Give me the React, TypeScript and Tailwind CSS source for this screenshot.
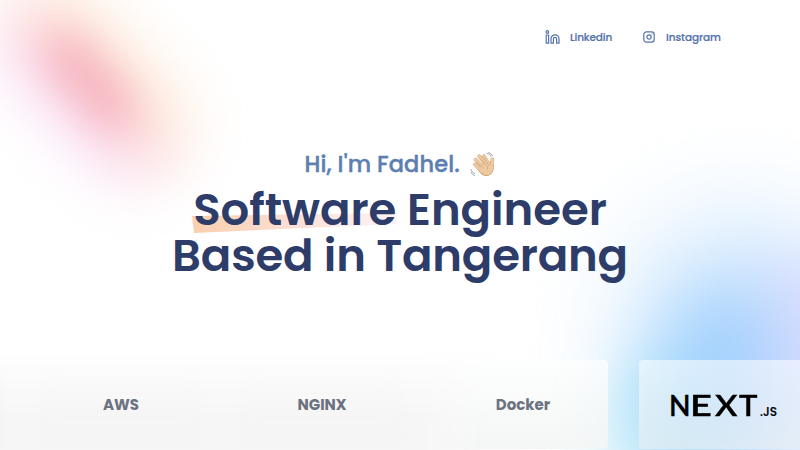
import React from "react";

const cards = ["AWS", "NGINX", "Docker"];

function Backdrop() {
  return (
    <div className="pointer-events-none absolute inset-0 overflow-hidden">
      <div className="absolute -left-[22px] top-[24px] h-[116px] w-[232px] rotate-[47deg] rounded-full bg-gradient-to-b from-[#fdd6b4] from-25% via-[#f7a8a2] via-55% to-[#f3b4ee] to-85% opacity-45 blur-[28px]" />
      <div className="absolute left-[32px] top-[59px] h-[44px] w-[116px] rotate-[49deg] rounded-full bg-[#ee7a96] opacity-45 blur-[20px]" />
      <div className="absolute left-[620px] top-[210px] h-[300px] w-[240px] rounded-full bg-[#c4e2fd] opacity-70 blur-[48px]" />
      <div className="absolute left-[610px] top-[355px] h-[140px] w-[110px] rounded-full bg-[#9fe0f4] opacity-60 blur-[28px]" />
      <div className="absolute left-[665px] top-[285px] h-[160px] w-[130px] rounded-full bg-[#85c2fc] opacity-60 blur-[34px]" />
      <div className="absolute left-[765px] top-[250px] h-[180px] w-[90px] rounded-full bg-[#d5ceff] opacity-50 blur-[30px]" />
    </div>
  );
}

function LinkedinIcon() {
  return (
    <svg className="h-[14px] w-[15px]" viewBox="0 0 15 14" fill="none" stroke="currentColor" strokeWidth="1.2" strokeLinejoin="round">
      <circle cx="2.4" cy="2" r="1.3" />
      <path d="M1.2 5h2.400v8.200H1.200zM6 13.200V8.800a4 4 0 0 1 8 0v4.400h-2.400V9a1.600 1.600 0 0 0-3.200 0v4.200z" />
    </svg>
  );
}

function InstagramIcon() {
  return (
    <svg className="h-[12px] w-[12px]" viewBox="0 0 12 12" fill="none" stroke="currentColor" strokeWidth="1.2">
      <rect x="0.8" y="0.8" width="10.4" height="10.4" rx="2.6" />
      <circle cx="6" cy="6" r="2.1" />
      <path d="M8.600 3.100h.8" />
    </svg>
  );
}

function WavingHand() {
  return (
    <svg className="h-[26px] w-[26px]" viewBox="0 0 26 26" fill="none" strokeLinecap="round">
      <g stroke="#cfa57a" strokeWidth="3.7">
        <path d="M5 12.500l7 7M5.600 7.600l9 9M9.200 4.200l8 9M14 4.200l4.500 8M22.300 7.400l-.5 8" />
      </g>
      <path d="M8 15l8-6 5 1 2.500 4c1 4-1 8-4.500 9.500-4 1.500-7 0-11-5z" fill="#cfa57a" />
      <g stroke="#edc8a0" strokeWidth="2.900">
        <path d="M5 12.500l7 7M5.600 7.600l9 9M9.200 4.200l8 9M14 4.200l4.500 8M22.300 7.400l-.5 8" />
      </g>
      <path d="M9 15l8-5 4 1 1.800 4c.7 3.500-1 6.500-4 7.700-3.500 1.200-6-.3-9.500-4.700z" fill="#edc8a0" />
      <path d="M7.300 10.500l5.500 5.500M10.500 7l5 6M14.200 6l3.400 6M21 12c-3 .5-4 2.500-3.500 5" stroke="#cb9d70" strokeWidth=".7" />
      <path d="M17 1.500c2 .3 3.300 1.300 4 3M18.800.7c1.800.5 3 1.500 3.700 3M1 17.500c.5 2 1.800 3.300 3.700 4M1.200 20.500c.7 1.500 1.800 2.500 3.300 3" stroke="#858990" strokeWidth=".8" />
    </svg>
  );
}

function NextLogo() {
  return (
    <div className="flex h-[30px] w-[108px] items-baseline whitespace-nowrap text-black">
      <span className="flex w-[90px] shrink-0 items-baseline font-['Lato','Liberation_Sans',sans-serif] text-[29.500px] font-semibold leading-[30px] [-webkit-text-stroke:0.4px_black]">
        <span className="w-[20px] origin-left -translate-x-px scale-x-[0.95]">N</span>
        <span className="w-[25px] origin-left scale-x-[1.28]">E</span>
        <span className="w-[24px] origin-left scale-x-[1.15]">X</span>
        <span className="w-[21px] origin-left scale-x-[1.05]">T</span>
      </span>
      <span className="text-[12px] font-medium [-webkit-text-stroke:0.2px_black]">.JS</span>
    </div>
  );
}

export default function App() {
  return (
    <main className="relative flex h-[450px] w-[800px] flex-col overflow-hidden bg-white font-['Poppins','Inter',sans-serif]">
      <Backdrop />
      <nav className="relative flex h-[74px] items-center justify-end pr-20 text-[10.500px] font-medium text-[#5474ac]">
        <a className="flex items-center gap-[10px]">
          <LinkedinIcon />
          <span className="w-[42px] whitespace-nowrap pt-px tracking-[-0.15px] [-webkit-text-stroke:0.2px_#5474ac]">Linkedin</span>
        </a>
        <a className="ml-[31px] flex items-center gap-[11px]">
          <InstagramIcon />
          <span className="w-[54px] whitespace-nowrap pt-px tracking-[-0.05px] [-webkit-text-stroke:0.2px_#5474ac]">Instagram</span>
        </a>
      </nav>
      <section className="relative flex h-[286px] flex-col items-center pt-[76px] text-[#2d3c69]">
        <div className="flex h-[29px] items-center gap-[10px] text-[#5c7eb0]">
          <p className="w-[155px] whitespace-nowrap text-[22.500px] font-medium leading-[29px] tracking-[0.1px] [-webkit-text-stroke:0.4px_#5c7eb0]">Hi, I'm Fadhel.</p>
          <WavingHand />
        </div>
        <h1 className="mt-[8px] flex flex-col items-center whitespace-nowrap text-[45px] font-semibold leading-[46px]">
          <span className="relative">
            <svg className="absolute -left-px top-[26px] h-[22px] w-[208px]" viewBox="0 0 208 22">
              <defs>
                <linearGradient id="marker">
                  <stop stopColor="#fbcfad" />
                  <stop offset=".5" stopColor="#fbdfd6" />
                  <stop offset="1" stopColor="#fdf3f7" />
                </linearGradient>
              </defs>
              <path d="M0 3L205 0L204 11L2 20Z" fill="url(#marker)" />
            </svg>
            <span className="relative tracking-[-0.04px]">Software Engineer</span>
          </span>
          <span className="tracking-[-0.2px]">Based in Tangerang</span>
        </h1>
      </section>
      <section className="relative -ml-[165px] flex h-[90px] w-[975px] gap-[31px]">
        <div className="absolute -top-[14px] left-[140px] h-[120px] w-[570px] bg-gradient-to-b from-transparent to-[#f6f6f6] to-60% [mask-image:linear-gradient(to_right,black_78%,transparent)]" />
        <div className="relative h-[89px] w-[170px] shrink-0 rounded bg-gradient-to-b from-transparent to-[#f3f3f3]/60" />
        {cards.map((name) => (
          <div key={name} className="relative flex h-[89px] w-[170px] shrink-0 items-center justify-center pt-[2px] text-[15px] font-bold text-[#6b7280]">
            <div
              className={
                "absolute inset-0 rounded " +
                (name === "Docker"
                  ? "bg-gradient-to-b from-[#fdfefe]/75 to-[#f3f5f4]/85 [mask-image:linear-gradient(to_right,transparent,black_25%)]"
                  : "bg-gradient-to-b from-[#ffffff]/20 to-[#f4f4f4]/80 [mask-image:linear-gradient(to_right,transparent,black_15%,black_85%,transparent)]")
              }
            />
            <span className="relative">{name}</span>
          </div>
        ))}
        <div className="relative flex h-[89px] w-[170px] shrink-0 items-center justify-center rounded bg-gradient-to-b from-white/55 to-[#eceff1]/60">
          <NextLogo />
        </div>
      </section>
    </main>
  );
}
